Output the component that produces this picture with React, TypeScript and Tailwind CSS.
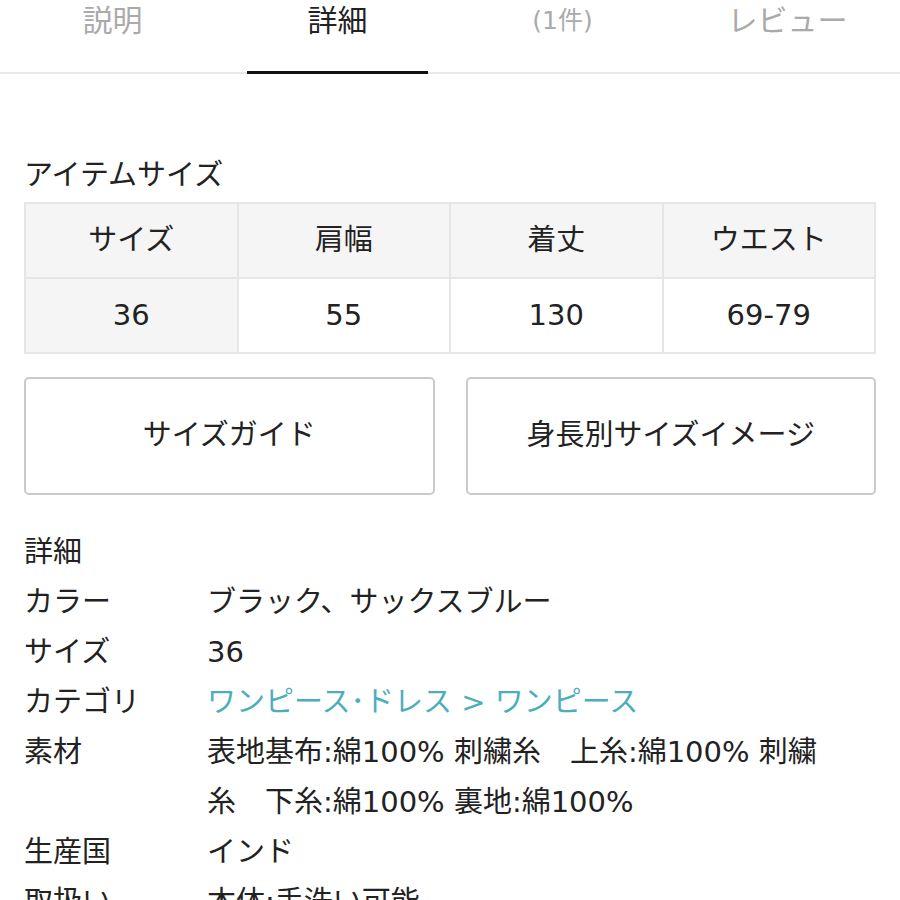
const font = { fontFamily: '"DejaVu Sans", "Noto Sans CJK JP", sans-serif' };

const tabs = ["説明", "詳細", "(1件)", "レビュー"];

const sizeHead = ["サイズ", "肩幅", "着丈", "ウエスト"];
const sizeBody = ["36", "55", "130", "69-79"];

function DetailRow({ label, children }: { label: string; children: React.ReactNode }) {
  return (
    <div className="flex leading-[50px]">
      <div className="w-[183px] shrink-0">{label}</div>
      <div className="flex-1">{children}</div>
    </div>
  );
}

export default function App() {
  return (
    <div className="w-[900px] h-[900px] overflow-hidden bg-white text-[#222] text-[29px]" style={font}>
      {/* Tabs */}
      <div className="relative h-[74px] border-b-2 border-[#e8e8e8] grid grid-cols-4">
        {tabs.map((t, i) => (
          <div
            key={t}
            className={`relative flex justify-center leading-[42px] ${i === 1 ? "text-[#222]" : "text-[#aaa]"} ${
              i === 2 ? "text-[25px]" : "text-[30px]"
            }`}
          >
            {t}
            {i === 1 && <div className="absolute left-[22px] right-[22px] bottom-[-2px] h-[3px] bg-[#111]" />}
          </div>
        ))}
      </div>

      <div className="px-6">
        {/* Item size */}
        <div className="mt-[80px] leading-[42px]">アイテムサイズ</div>
        <table className="mt-[6px] w-full border-collapse table-fixed">
          <tbody>
            <tr className="h-[75px]">
              {sizeHead.map((h) => (
                <td key={h} className="border-2 border-[#e6e6e6] bg-[#f5f5f5] text-center">
                  {h}
                </td>
              ))}
            </tr>
            <tr className="h-[75px]">
              {sizeBody.map((v, i) => (
                <td
                  key={v}
                  className={`border-2 border-[#e6e6e6] text-center ${i === 0 ? "bg-[#f5f5f5]" : "bg-white"}`}
                >
                  {v}
                </td>
              ))}
            </tr>
          </tbody>
        </table>

        {/* Buttons */}
        <div className="mt-[23px] grid grid-cols-2 gap-[31px]">
          <button className="h-[118px] rounded-[5px] border-2 border-[#cacaca] bg-white text-[29px] text-[#222]">
            サイズガイド
          </button>
          <button className="h-[118px] rounded-[5px] border-2 border-[#cacaca] bg-white text-[29px] text-[#222]">
            身長別サイズイメージ
          </button>
        </div>

        {/* Details */}
        <div className="mt-[32px] leading-[50px]">詳細</div>
        <DetailRow label="カラー">ブラック、サックスブルー</DetailRow>
        <DetailRow label="サイズ">36</DetailRow>
        <DetailRow label="カテゴリ">
          <span className="text-[#4daebb]">ワンピース･ドレス &gt; ワンピース</span>
        </DetailRow>
        <DetailRow label="素材">
          表地基布:綿100% 刺繍糸　上糸:綿100% 刺繍
          <br />
          糸　下糸:綿100% 裏地:綿100%
        </DetailRow>
        <DetailRow label="生産国">インド</DetailRow>
        <DetailRow label="取扱い">本体:手洗い可能</DetailRow>
      </div>
    </div>
  );
}
